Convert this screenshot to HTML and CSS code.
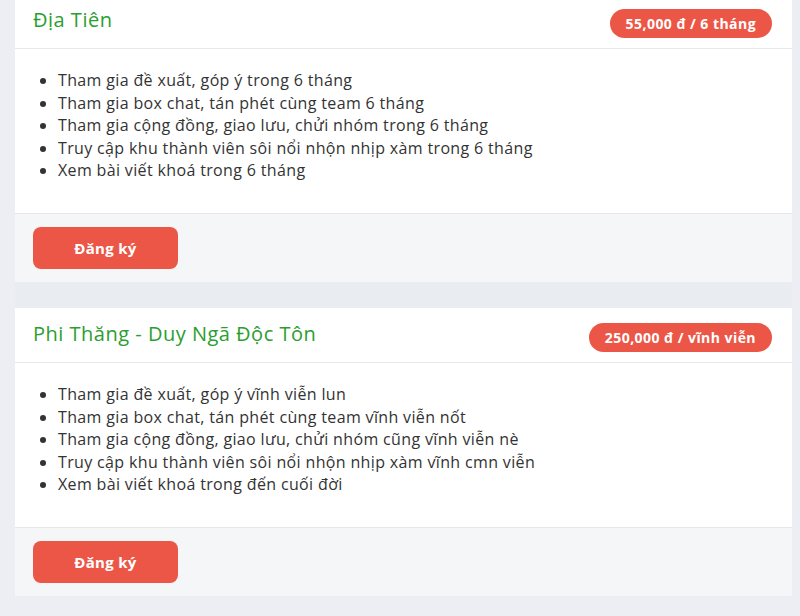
FILE: index.html
```html
<!DOCTYPE html>
<html lang="vi">
<head>
<meta charset="utf-8">
<title>Gói thành viên</title>
<link rel="stylesheet" href="styles.css">
</head>
<body>
<div class="page">
  <section class="card first">
    <header class="card-head">
      <h2 class="title">Địa Tiên</h2>
      <span class="badge">55,000 đ / 6 tháng</span>
    </header>
    <div class="card-body">
      <ul class="perks">
        <li>Tham gia đề xuất, góp ý trong 6 tháng</li>
        <li>Tham gia box chat, tán phét cùng team 6 tháng</li>
        <li>Tham gia cộng đồng, giao lưu, chửi nhóm trong 6 tháng</li>
        <li>Truy cập khu thành viên sôi nổi nhộn nhịp xàm trong 6 tháng</li>
        <li>Xem bài viết khoá trong 6 tháng</li>
      </ul>
    </div>
    <footer class="card-foot">
      <button class="btn" type="button">Đăng ký</button>
    </footer>
  </section>
  <section class="card">
    <header class="card-head">
      <h2 class="title">Phi Thăng - Duy Ngã Độc Tôn</h2>
      <span class="badge">250,000 đ / vĩnh viễn</span>
    </header>
    <div class="card-body">
      <ul class="perks">
        <li>Tham gia đề xuất, góp ý vĩnh viễn lun</li>
        <li>Tham gia box chat, tán phét cùng team vĩnh viễn nốt</li>
        <li>Tham gia cộng đồng, giao lưu, chửi nhóm cũng vĩnh viễn nè</li>
        <li>Truy cập khu thành viên sôi nổi nhộn nhịp xàm vĩnh cmn viễn</li>
        <li>Xem bài viết khoá trong đến cuối đời</li>
      </ul>
    </div>
    <footer class="card-foot">
      <button class="btn" type="button">Đăng ký</button>
    </footer>
  </section>
</div>
</body>
</html>
```

FILE: styles.css
```css
html, body {
  margin: 0;
  padding: 0;
}
body {
  background: #eceef4;
  font-family: "Open Sans", "Noto Sans", sans-serif;
  color: #333;
  overflow: hidden;
}
.page {
  margin: -6px 8px 0 15px;
  background: #e9ecf1;
}
.card {
  background: #fff;
  margin-bottom: 26px;
}
.card-head {
  height: 55px;
  box-sizing: border-box;
  border-bottom: 1px solid #e6e8ec;
  padding: 0 20px 0 18px;
  display: flex;
  align-items: center;
  justify-content: space-between;
}
.title {
  margin: 0 0 3px;
  font-size: 20px;
  font-weight: 500;
  letter-spacing: 0.5px;
  color: #2b9e30;
}
.badge {
  background: #ec5646;
  color: #fff;
  font-size: 14px;
  font-weight: 700;
  letter-spacing: 0.45px;
  height: 29px;
  line-height: 29px;
  padding: 0 16px;
  border-radius: 15px;
  margin-top: 5px;
}
.card-body {
  padding: 20px 18px 31px;
}
.perks {
  margin: 0;
  padding-left: 25px;
  font-size: 16px;
  letter-spacing: 0.35px;
  line-height: 22.6px;
}
.card-foot {
  background: #f5f6f8;
  border-top: 1px solid #e5e7eb;
  padding: 13px 18px;
}
.btn {
  display: block;
  width: 145px;
  height: 42px;
  border: 0;
  border-radius: 8px;
  background: #ec5646;
  color: #fff;
  font-family: inherit;
  font-size: 15px;
  font-weight: 700;
  letter-spacing: 0.3px;
}
```
